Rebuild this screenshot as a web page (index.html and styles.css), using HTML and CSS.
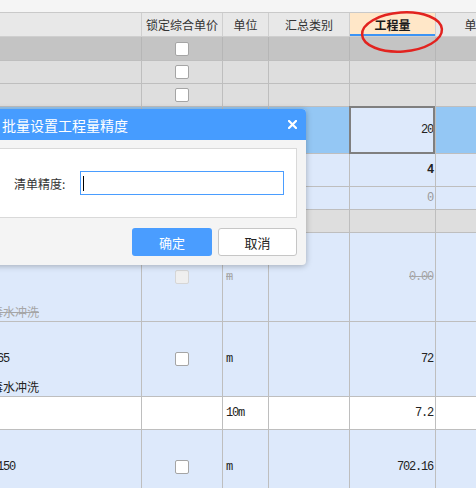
FILE: index.html
```html
<!DOCTYPE html>
<html lang="zh-CN">
<head>
<meta charset="utf-8">
<title>批量设置工程量精度</title>
<link rel="stylesheet" href="styles.css">
</head>
<body>
<div class="topbar"></div>
<div class="grid">
  <div class="row head">
    <div class="c c1"></div>
    <div class="c c2">锁定综合单价</div>
    <div class="c c3">单位</div>
    <div class="c c4">汇总类别</div>
    <div class="c c5 hl">工程量</div>
    <div class="c c6">单价</div>
  </div>
  <div class="row h24 gray2">
    <div class="c c1"></div><div class="c c2"><span class="cb"></span></div><div class="c c3"></div><div class="c c4"></div><div class="c c5"></div><div class="c c6"></div>
  </div>
  <div class="row h23 gray1">
    <div class="c c1"></div><div class="c c2"><span class="cb"></span></div><div class="c c3"></div><div class="c c4"></div><div class="c c5"></div><div class="c c6"></div>
  </div>
  <div class="row h23 gray1">
    <div class="c c1"></div><div class="c c2"><span class="cb"></span></div><div class="c c3"></div><div class="c c4"></div><div class="c c5"></div><div class="c c6"></div>
  </div>
  <div class="row h47 selrow">
    <div class="c c1"></div><div class="c c2"></div><div class="c c3"></div><div class="c c4"></div><div class="c c5 sel mono">20</div><div class="c c6"></div>
  </div>
  <div class="row h33 blue">
    <div class="c c1"></div><div class="c c2"></div><div class="c c3"></div><div class="c c4"></div><div class="c c5 mono strong">4</div><div class="c c6"></div>
  </div>
  <div class="row h23 blue">
    <div class="c c1"></div><div class="c c2"></div><div class="c c3"></div><div class="c c4"></div><div class="c c5 mono faint">0</div><div class="c c6"></div>
  </div>
  <div class="row h23 gray1">
    <div class="c c1"></div><div class="c c2"></div><div class="c c3"></div><div class="c c4"></div><div class="c c5"></div><div class="c c6"></div>
  </div>
  <div class="row h89 blue">
    <div class="c c1 bottom"><span class="line cn del">消毒水冲洗</span></div>
    <div class="c c2"><span class="cb dis"></span></div>
    <div class="c c3 mono del">m</div>
    <div class="c c4"></div>
    <div class="c c5 mono del">0.00</div>
    <div class="c c6"></div>
  </div>
  <div class="row h75 blue">
    <div class="c c1 lines"><span class="line">&nbsp;</span><span class="line mono code">DN65</span><span class="line cn">消毒水冲洗</span></div>
    <div class="c c2"><span class="cb"></span></div>
    <div class="c c3 mono">m</div>
    <div class="c c4"></div>
    <div class="c c5 mono">72</div>
    <div class="c c6"></div>
  </div>
  <div class="row h33 white">
    <div class="c c1"></div>
    <div class="c c2"></div>
    <div class="c c3 mono">10m</div>
    <div class="c c4"></div>
    <div class="c c5 mono">7.2</div>
    <div class="c c6"></div>
  </div>
  <div class="row h75 blue">
    <div class="c c1"><span class="line mono code">DN150</span></div>
    <div class="c c2"><span class="cb"></span></div>
    <div class="c c3 mono">m</div>
    <div class="c c4"></div>
    <div class="c c5 mono">702.16</div>
    <div class="c c6"></div>
  </div>
</div>

<div class="dialog">
  <div class="dlg-title">
    <span>批量设置工程量精度</span>
    <svg class="close" width="9" height="9" viewBox="0 0 9 9"><path d="M1 1L8 8M8 1L1 8" stroke="#fff" stroke-width="2.2" stroke-linecap="square"/></svg>
  </div>
  <div class="dlg-body">
    <div class="panel">
      <span class="label">清单精度:</span>
      <div class="field"><span class="caret"></span></div>
    </div>
    <div class="actions">
      <div class="btn primary">确定</div>
      <div class="btn ghost">取消</div>
    </div>
  </div>
</div>

<svg class="mark" width="92" height="48" viewBox="0 0 92 48"><ellipse cx="45" cy="23" rx="40" ry="19.5" transform="rotate(-4 45 23)" fill="none" stroke="#e2231f" stroke-width="2.5"/></svg>
</body>
</html>
```

FILE: styles.css
```css
html, body {
  margin: 0;
  padding: 0;
  overflow: hidden;
  width: 476px;
  height: 488px;
}
body {
  position: relative;
  background: #f5f5f5;
  font-family: "Noto Sans CJK SC", sans-serif;
  font-size: 12px;
  color: #222;
}
.topbar {
  height: 12px;
  background: #f5f5f5;
  border-bottom: 1px solid #c9c9c9;
}
.grid {
  width: 520px;
}
.row {
  display: flex;
  box-sizing: border-box;
  border-bottom: 1px solid #bebebe;
}
.c {
  flex: none;
  box-sizing: border-box;
  border-right: 1px solid #bebebe;
  display: flex;
  align-items: center;
  overflow: hidden;
  white-space: nowrap;
  line-height: 16px;
}
.c1 { width: 142px; }
.c2 { width: 81px; justify-content: center; }
.c3 { width: 46px; padding-left: 3px; }
.c4 { width: 81px; }
.c5 { width: 86px; justify-content: flex-end; padding-right: 2px; }
.c6 { width: 82px; }

.head {
  height: 24px;
  background: #e8e8e8;
  border-bottom-color: #cfcfcf;
  color: #333;
}
.head .c {
  border-right-color: #cfcfcf;
  justify-content: center;
  padding: 0;
}
.head .hl {
  background: #ffe7c8;
  font-weight: bold;
  color: #1a1a1a;
  box-shadow: inset 0 -2px 0 #3c94f5;
}

.h23 { height: 23px; }
.h24 { height: 24px; }
.h33 { height: 33px; }
.h47 { height: 47px; }
.h75 { height: 75px; }
.h89 { height: 89px; }

.gray2 { background: #c4c4c4; }
.gray2 .c { border-right-color: #b6b6b6; }
.gray1 { background: #dedede; }
.selrow { background: #94c7f4; }
.blue { background: #dde9fb; }
.white { background: #fff; }

.sel {
  position: relative;
  background: #dde9fb;
  overflow: visible;
}
.sel::after {
  content: "";
  position: absolute;
  left: -1px;
  top: -1px;
  right: 0;
  bottom: -1px;
  border: 2px solid #7f7f7f;
}

.cb {
  width: 14px;
  height: 14px;
  box-sizing: border-box;
  background: #fff;
  border: 1px solid #a5a5a5;
  border-radius: 2px;
}
.cb.dis {
  background: #efefef;
  border-color: #d6d6d6;
}

.mono {
  font-family: "Liberation Mono", "DejaVu Sans Mono", monospace;
  font-size: 12px;
  letter-spacing: -1.2px;
}
.strong { font-weight: bold; }
.faint { color: #9a9a9a; }
.del {
  color: #a6a6a6;
  text-decoration: line-through;
}

.bottom {
  align-items: flex-end;
}
.bottom .line {
  line-height: 18px;
}
.lines {
  flex-direction: column;
  align-items: flex-start;
  justify-content: center;
}
.lines .line {
  line-height: 28px;
}
.line.cn { margin-left: -21px; }
.line.code { margin-left: -15px; }

.dialog {
  position: absolute;
  left: -10px;
  top: 109px;
  width: 316px;
  background: #f4f4f4;
  border-radius: 4px;
  box-shadow: 0 1px 6px rgba(0, 0, 0, 0.28);
  overflow: hidden;
}
.dlg-title {
  height: 31px;
  background: #469cff;
  color: #fff;
  font-size: 14px;
  display: flex;
  align-items: center;
  justify-content: space-between;
  padding: 0 9px 0 12px;
}
.close { display: block; }
.dlg-body {
  padding: 8px 9px 9px;
}
.panel {
  height: 70px;
  box-sizing: border-box;
  background: #fff;
  border: 1px solid #d9d9d9;
  display: flex;
  align-items: center;
  padding-left: 14px;
}
.label {
  width: 54px;
  margin-right: 12px;
  color: #333;
}
.field {
  width: 204px;
  height: 24px;
  box-sizing: border-box;
  border: 1px solid #4a9dff;
  display: flex;
  align-items: center;
  padding-left: 2px;
}
.caret {
  width: 1px;
  height: 15px;
  background: #000;
}
.actions {
  display: flex;
  justify-content: flex-end;
  gap: 6px;
  margin-top: 10px;
}
.btn {
  height: 28px;
  box-sizing: border-box;
  border-radius: 3px;
  font-size: 13px;
  display: flex;
  align-items: center;
  justify-content: center;
}
.primary {
  width: 80px;
  background: #4a9dff;
  color: #fff;
}
.ghost {
  width: 79px;
  background: #fff;
  border: 1px solid #c6c6c6;
  color: #222;
}

.mark {
  position: absolute;
  left: 357px;
  top: 9px;
}
```
